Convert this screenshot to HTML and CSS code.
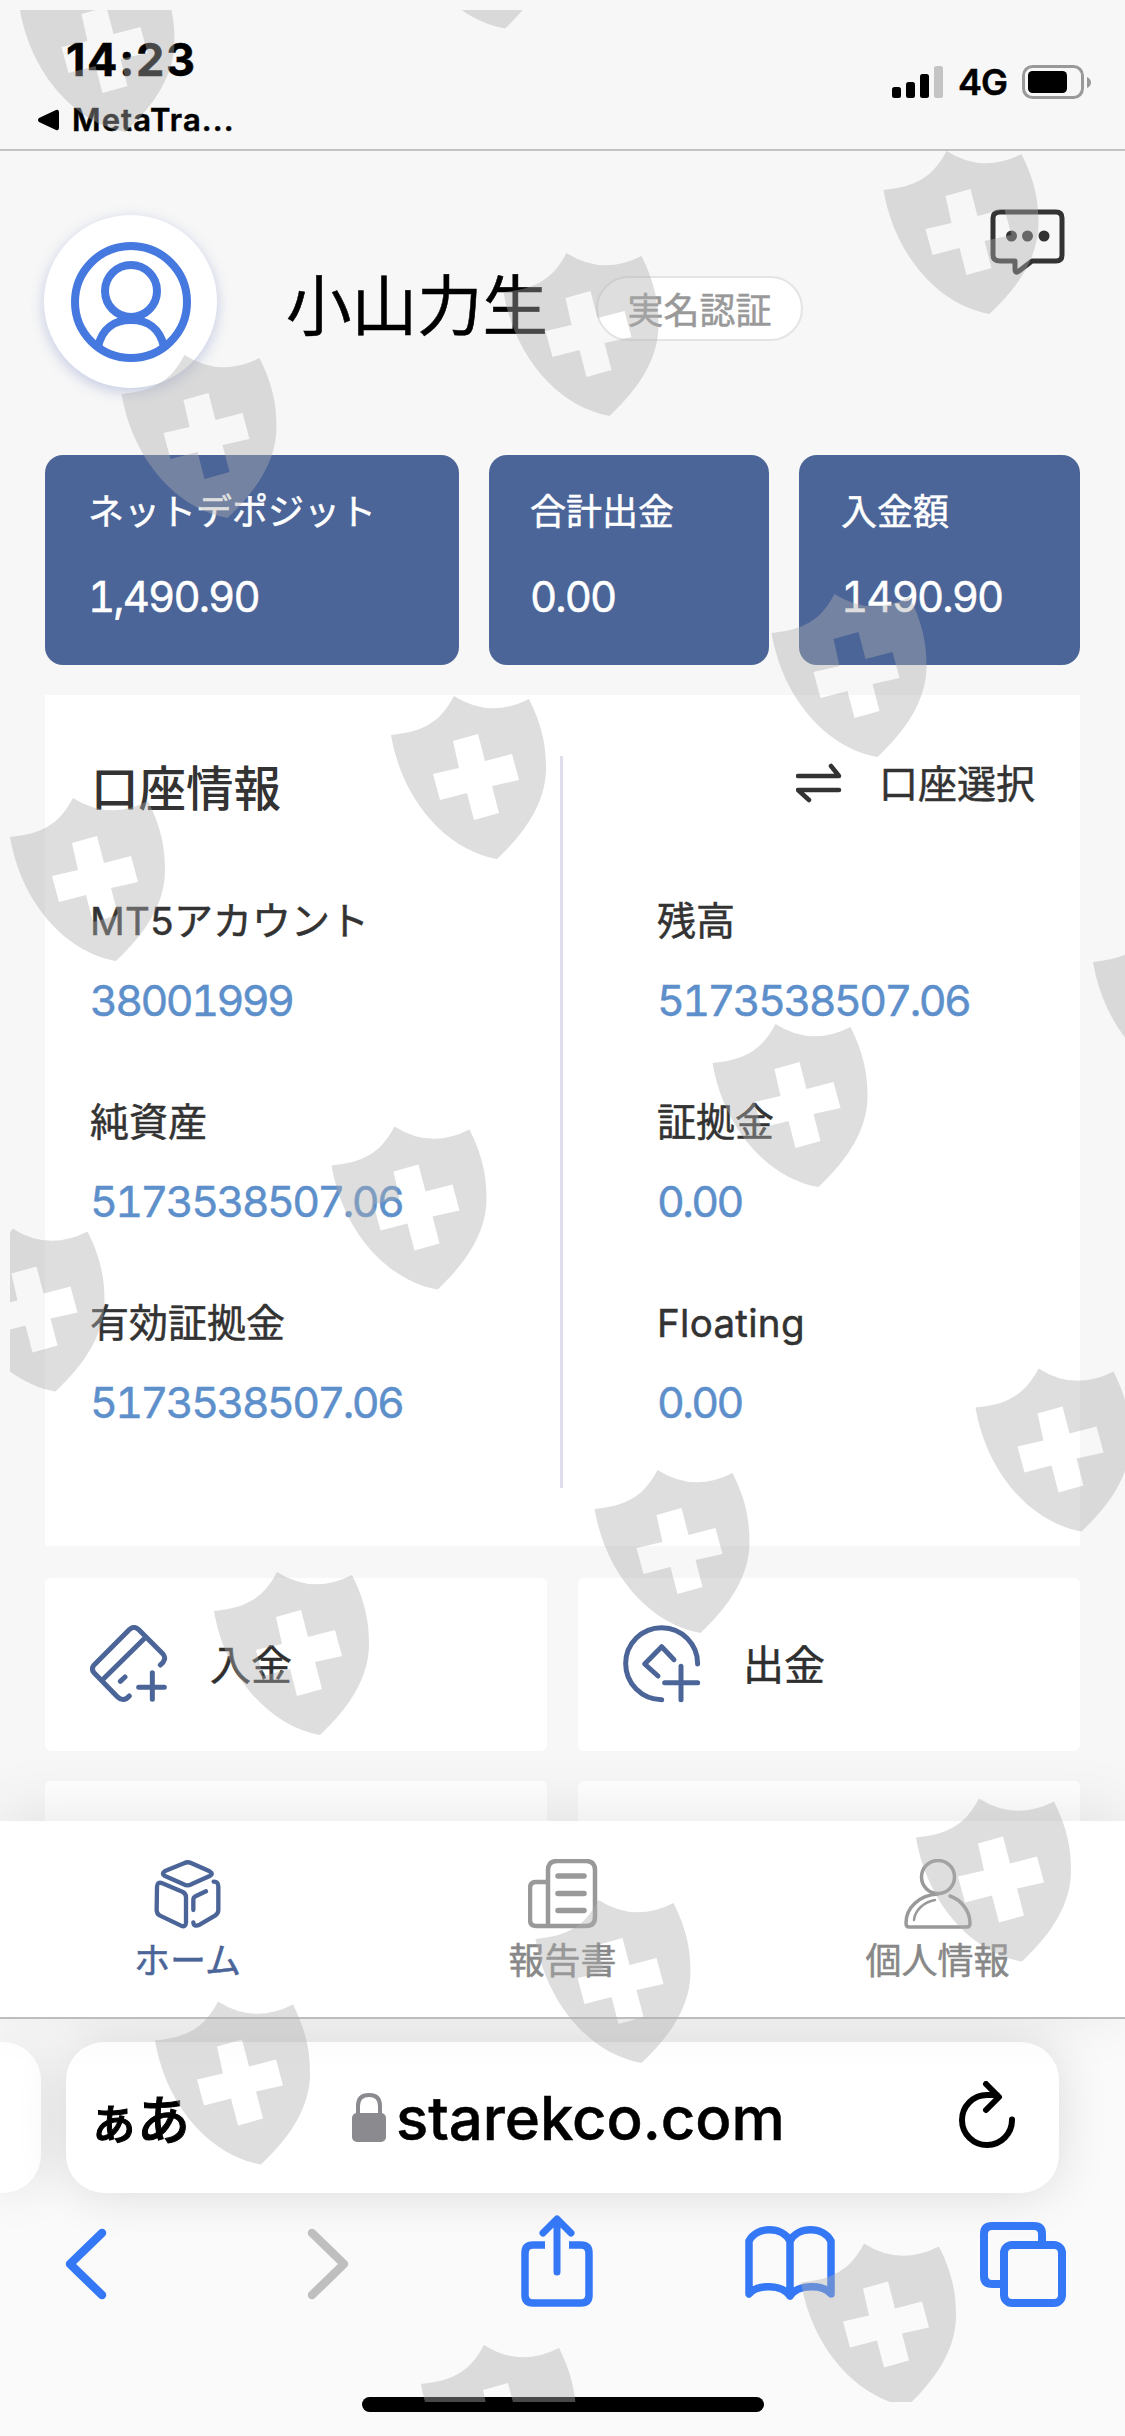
FILE: index.html
```html
<!DOCTYPE html>
<html lang="ja">
<head>
<meta charset="utf-8">
<title>starekco.com</title>
<link rel="stylesheet" href="styles.css">
</head>
<body>
<div class="screen">
  <header class="status">
    <div class="status-left">
      <div class="time">14:23</div>
      <div class="back-app"><svg width="23" height="22" viewBox="0 0 23 22"><path d="M19 1Q22 0 22 4V18Q22 22 19 21L2 13Q0 11 2 9Z"/></svg><span>MetaTra...</span></div>
    </div>
    <div class="status-right">
      <svg width="52" height="34" viewBox="0 0 52 34"><rect x="0" y="22" width="9" height="11" rx="2.5"/><rect x="14" y="17" width="9" height="16" rx="2.5"/><rect x="28" y="9" width="9" height="24" rx="2.5"/><rect x="42" y="1" width="9" height="32" rx="2.5" fill="#c4c4c4"/></svg>
      <span class="net">4G</span>
      <svg width="70" height="34" viewBox="0 0 70 34"><rect x="1.5" y="1.5" width="59" height="31" rx="9" fill="none" stroke="#999" stroke-width="3"/><rect x="6" y="6" width="39" height="22" rx="4.5"/><path d="M65 12Q69 14 69 17.5T65 23Z" fill="#999"/></svg>
    </div>
  </header>

  <main class="page">
    <section class="profile">
      <div class="avatar">
        <svg width="120" height="120" viewBox="0 0 120 120" fill="none" stroke="#4679e0" stroke-width="8"><circle cx="60" cy="60" r="56"/><circle cx="60" cy="49" r="26"/><path d="M27 105C31 86 44 78 60 78S89 86 93 105"/></svg>
      </div>
      <h1 class="name">小山力生</h1>
      <span class="verify">実名認証</span>
      <svg class="chat" width="76" height="67" viewBox="0 0 76 67"><path d="M10 3H66Q72 3 72 9V46Q72 52 66 52H42L29 62Q25 65 25 60V52H10Q3 52 3 46V9Q3 3 10 3Z" fill="none" stroke="#333" stroke-width="5" stroke-linejoin="round"/><g fill="#333"><circle cx="21.500" cy="27" r="5.500"/><circle cx="37.500" cy="27" r="5.500"/><circle cx="54" cy="27" r="5.500"/></g></svg>
    </section>

    <section class="cards">
      <div class="card"><div class="card-title">ネットデポジット</div><div class="card-value">1,490.90</div></div>
      <div class="card"><div class="card-title">合計出金</div><div class="card-value">0.00</div></div>
      <div class="card"><div class="card-title">入金額</div><div class="card-value">1490.90</div></div>
    </section>

    <section class="account">
      <div class="col">
        <h2 class="account-title">口座情報</h2>
        <div class="field"><div class="label"><span class="latin">MT5</span>アカウント</div><div class="value">38001999</div></div>
        <div class="field"><div class="label">純資産</div><div class="value">5173538507.06</div></div>
        <div class="field"><div class="label">有効証拠金</div><div class="value">5173538507.06</div></div>
      </div>
      <div class="divider"></div>
      <div class="col">
        <div class="switch"><svg width="46" height="40" viewBox="0 0 46 40" fill="none" stroke="#333" stroke-width="4.500" stroke-linecap="round" stroke-linejoin="round"><path d="M2 13H43L35 3M43 27H2L13 37"/></svg><span>口座選択</span></div>
        <div class="field"><div class="label">残高</div><div class="value">5173538507.06</div></div>
        <div class="field"><div class="label">証拠金</div><div class="value">0.00</div></div>
        <div class="field"><div class="label"><span class="latin">Floating</span></div><div class="value">0.00</div></div>
      </div>
    </section>

    <section class="tiles">
      <div class="tile">
        <svg width="78" height="78" viewBox="90 104 234 234" fill="none" stroke="#4b6598" stroke-width="15" stroke-linecap="round" stroke-linejoin="round"><path d="M208 317Q190 337 172 319L102 247Q92 235 103 223L209 117Q222 106 235 117L309 191Q322 207 301 224M130 266L251 147M181 273L195 260M277 247V327M236 291H313"/></svg>
        <span>入金</span>
      </div>
      <div class="tile">
        <svg width="78" height="78" viewBox="68 104 234 234" fill="none" stroke="#4b6598" stroke-width="15" stroke-linecap="round" stroke-linejoin="round"><path d="M184 328A108 108 0 1 1 292 221M173 257L133 221L184 169L221 208M242 228V328M193 277H292"/></svg>
        <span>出金</span>
      </div>
      <div class="tile"></div>
      <div class="tile"></div>
    </section>
  </main>

  <nav class="tabs">
    <div class="tab active">
      <svg width="68" height="70" viewBox="73 54 204 210" fill="none" stroke="#4b6598" stroke-width="13" stroke-linecap="round" stroke-linejoin="round"><path d="M163 67Q173 61 184 66L240 91Q253 98 240 105L185 130Q173 136 162 130L106 105Q93 98 106 90ZM82 137Q83 121 98 127L158 152Q169 157 169 168V245Q168 260 154 254L91 224Q81 219 81 207ZM252 122Q266 121 266 136V207Q266 218 256 224L210 251Q192 259 191 244M191 207V176Q191 168 199 165L229 151"/></svg>
      <span>ホーム</span>
    </div>
    <div class="tab">
      <svg width="70" height="70" viewBox="0 0 70 70" fill="none" stroke="#999" stroke-width="4.500" stroke-linecap="round"><path d="M20 67V11Q20 2 29 2H58Q67 2 67 11V58Q67 67 58 67H8Q2 67 2 61V29Q2 23 8 23H20" /><path d="M30 17H56M30 34.500H56M30 51.500H56" stroke-width="5.500"/></svg>
      <span>報告書</span>
    </div>
    <div class="tab">
      <svg width="68" height="70" viewBox="0 0 68 70" fill="none" stroke="#999" stroke-width="3.500" stroke-linecap="round"><ellipse cx="34" cy="18" rx="16.500" ry="16.500"/><path d="M34 35C15 36 2 49 2 64Q2 68 5 68H63Q66 68 66 64C66 53 58 41 46 37"/><path d="M31 41C20 43 11 51 10 61" stroke-width="2.500"/></svg>
      <span>個人情報</span>
    </div>
  </nav>

  <footer class="browser">
    <div class="address-row">
      <div class="neighbor"></div>
      <div class="address">
        <div class="reader"><span class="small-a">ぁ</span><span>あ</span></div>
        <svg class="lock" width="34" height="49" viewBox="0 0 34 49"><rect x="0" y="20" width="34" height="29" rx="5" fill="#8a8a8f"/><path d="M6 21V13Q6 2 17 2T28 13V21" fill="none" stroke="#8a8a8f" stroke-width="4"/></svg>
        <span class="host">starekco.com</span>
        <svg class="reload" width="56" height="68" viewBox="0 0 56 68" fill="none" stroke="#000" stroke-width="6" stroke-linecap="round" stroke-linejoin="round"><path d="M53 38.500A25 25 0 1 1 28 14H38M27 3L40 16L27 29"/></svg>
      </div>
    </div>
    <div class="toolbar">
      <svg width="42" height="72" viewBox="0 0 42 72"><path d="M37 5L5 36L37 67" stroke="#3478f6" stroke-width="8.500"/></svg>
      <svg width="42" height="72" viewBox="0 0 42 72"><path d="M5 5L37 36L5 67" stroke="#bfbfbf" stroke-width="8.500"/></svg>
      <svg class="share" width="74" height="93" viewBox="0 0 74 93" stroke="#3478f6" stroke-width="7.500"><path d="M24 30H12Q4 30 4 38V80Q4 88 12 88H60Q68 88 68 80V38Q68 30 60 30H48" stroke-linecap="butt"/><path d="M36 57V5M22 18L36 4L50 18" stroke-width="7"/></svg>
      <svg class="book" width="92" height="77" viewBox="0 0 92 77" stroke="#3478f6" stroke-width="7.500"><path d="M4 69V16C12 1 37 1 45 16C53 1 78 1 86 16V69C78 59 53 59 45 71C37 59 12 59 4 69ZM45 16V71"/></svg>
      <svg class="pages" width="88" height="86" viewBox="0 0 88 86" stroke="#3478f6" stroke-width="8"><path d="M20 62H12Q4 62 4 54V12Q4 4 12 4H54Q62 4 62 12V20" stroke-linecap="butt"/><rect x="24" y="23" width="58" height="58" rx="8"/></svg>
    </div>
    <div class="home-indicator"></div>
  </footer>

  <svg class="watermark" width="1115" height="2392" viewBox="10 10 1115 2392">
    <defs><path id="shield" fill-rule="evenodd" d="M74 6Q110 29 149 9C162 35 166 55 166 78C166 110 148 140 117 169C66 160 22 110 11 45C42 42 60 33 74 6ZM73 51L79 78L53 84L60 110L87 103L94 130L119 123L112 96L139 90L132 64L105 71L98 44Z"/></defs>
    <g fill="#b0b0b0" fill-opacity=".41">
      <use href="#shield" x="8.500" y="-37"/><use href="#shield" x="388" y="-140.500"/>
      <use href="#shield" x="872.500" y="145"/><use href="#shield" x="492.500" y="247"/>
      <use href="#shield" x="110.500" y="349"/><use href="#shield" x="760.500" y="588"/>
      <use href="#shield" x="380" y="690"/><use href="#shield" x="-1" y="792"/>
      <use href="#shield" x="1082" y="917"/><use href="#shield" x="701.500" y="1018"/>
      <use href="#shield" x="320.500" y="1120.500"/><use href="#shield" x="-61.500" y="1222.500"/>
      <use href="#shield" x="964.500" y="1362.500"/><use href="#shield" x="583.500" y="1464"/>
      <use href="#shield" x="203" y="1566"/><use href="#shield" x="905" y="1792.500"/>
      <use href="#shield" x="524.500" y="1894"/><use href="#shield" x="144" y="1995.500"/>
      <use href="#shield" x="790" y="2237.500"/><use href="#shield" x="410" y="2339"/>
    </g>
  </svg>
</div>
</body>
</html>
```
FILE: styles.css
```css
* { box-sizing: border-box; margin: 0; padding: 0; }
body { background: #f7f7f7; font-family: "Noto Sans CJK JP", sans-serif; -webkit-text-stroke: .5px currentColor; }
svg { display: block; flex: none; }
.screen { position: relative; width: 1125px; height: 2436px; overflow: hidden; display: flex; flex-direction: column; background: #f7f7f7; }

.status { height: 151px; flex: none; display: flex; justify-content: space-between; border-bottom: 2px solid #c2c2c2; font-family: Inter, sans-serif; }
.status-left { padding: 35px 0 0 37px; }
.time { padding-left: 29px; font-size: 45px; line-height: 50px; font-weight: 700; letter-spacing: 1.7px; }
.back-app { display: flex; align-items: center; gap: 12px; margin-top: 17px; font-size: 31px; line-height: 36px; font-weight: 600; letter-spacing: 1.1px; }
.status-right { display: flex; align-items: center; height: 34px; margin: 65px 33px 0 0; }
.net { width: 49px; margin: 0 15px 0 14px; font-size: 36px; line-height: 34px; font-weight: 600; letter-spacing: -1px; }

.page { height: 1670px; flex: none; overflow: hidden; padding: 0 45px; }
.profile { display: flex; height: 304px; align-items: flex-start; }
.avatar { width: 173px; height: 173px; margin: 64px 0 0 -1px; border-radius: 50%; background: #fff; box-shadow: 0 4px 14px rgba(75, 101, 180, .3); display: flex; align-items: center; justify-content: center; }
.name { margin: 103px 0 0 69px; width: 265px; font-size: 65.5px; line-height: 96px; font-weight: 400; color: #000; white-space: nowrap; }
.verify { margin: 125px 0 0 45px; width: 207px; height: 65px; border: 2px solid #e4e4e4; border-radius: 33px; background: #fff; text-align: center; font-size: 36px; line-height: 61px; color: #999; }
.chat { margin: 58px 0 0 auto; transform: translateX(-14px); }

.cards { display: grid; grid-template-columns: 414px 280px 281px; gap: 30px; height: 210px; }
.card { background: #4b6598; color: #fff; border-radius: 18px; padding: 30px 0 0 41px; }
.card:first-child { padding-left: 43px; }
.card:last-child { padding-left: 42px; }
.card-title { font-size: 36px; line-height: 48px; height: 48px; }
.card-value { margin-top: 40px; font-family: Inter, sans-serif; font-size: 42px; line-height: 48px; letter-spacing: -1.9px; font-variant-numeric: tabular-nums; }

.account { display: flex; height: 851px; margin-top: 30px; padding: 0 45px; background: #fff; color: #333; }
.divider { width: 3px; height: 732px; margin-top: 61px; background: #dedeec; }
.col { width: 470px; }
.divider + .col { width: 472px; padding-left: 94px; }
.account-title { height: 60px; margin: 61px 0 74px; padding-left: 1px; font-size: 47.5px; line-height: 60px; font-weight: 500; -webkit-text-stroke: 0; }
.switch { height: 60px; margin: 56px 0 79px; display: flex; align-items: center; justify-content: flex-end; gap: 37px; font-size: 39px; line-height: 60px; white-space: nowrap; }
.switch svg { transform: translateY(2px); }
.field { height: 201px; }
.label { font-size: 39px; line-height: 56px; height: 56px; white-space: nowrap; }
.latin { font-family: Inter, sans-serif; font-size: 38.5px; letter-spacing: .3px; }
.value { margin-top: 27px; font-family: Inter, sans-serif; font-size: 43px; line-height: 54px; color: #5d8fcb; letter-spacing: -2.6px; font-variant-numeric: tabular-nums; }

.tiles { display: grid; grid-template-columns: 1fr 1fr; grid-auto-rows: 173px; gap: 30px 31px; margin-top: 32px; }
.tile { background: #fff; border-radius: 6px; display: flex; align-items: center; gap: 42px; padding-left: 45px; font-size: 41px; line-height: 60px; color: #2f2f2f; }
.tile svg { transform: translateY(-1px); }
.tile span { transform: translateY(-3px); }

.tabs { height: 198px; flex: none; display: grid; grid-template-columns: 1fr 1fr 1fr; background: #fff; border-bottom: 2px solid #bdbdbd; box-shadow: 0 -8px 60px rgba(0, 0, 0, .09); position: relative; }
.tab { display: flex; flex-direction: column; align-items: center; padding-top: 38px; font-size: 36px; line-height: 48px; color: #888; }
.tab span { margin-top: 5px; }
.active { color: #4b6598; }

.browser { flex: 1; background: #fafafa; overflow: hidden; display: flex; flex-direction: column; }
.address-row { display: flex; gap: 25px; padding-top: 23px; }
.neighbor { width: 41px; height: 151px; background: #fff; border-radius: 0 38px 38px 0; box-shadow: 0 0 50px rgba(0, 0, 0, .12); }
.address { width: 993px; height: 151px; background: #fff; border-radius: 38px; box-shadow: 0 0 50px rgba(0, 0, 0, .13); display: flex; align-items: center; padding: 0 44px 0 22px; }
.reader { width: 116px; font-size: 53px; line-height: 70px; font-weight: 500; display: flex; align-items: baseline; letter-spacing: -2px; -webkit-text-stroke: 1px #000; }
.small-a { font-size: 51px; }
.lock { margin-left: 148px; }
.host { margin-left: 10px; font-family: Inter, sans-serif; font-size: 60px; line-height: 60px; font-weight: 500; letter-spacing: -.1px; }
.reload { margin-left: auto; transform: translateY(-3px); }
.toolbar { display: grid; grid-template-columns: 242px 214px 224px 235px 90px; padding: 35px 0 0 65px; height: 188px; stroke-linecap: round; stroke-linejoin: round; }
.toolbar svg { fill: none; }
.share { margin-top: -13px; }
.book { margin-top: -3px; }
.pages { margin-top: -6px; }
.home-indicator { width: 402px; height: 15px; margin: 16px auto 0; background: #000; border-radius: 8px; }

.watermark { position: absolute; left: 10px; top: 10px; }
```
